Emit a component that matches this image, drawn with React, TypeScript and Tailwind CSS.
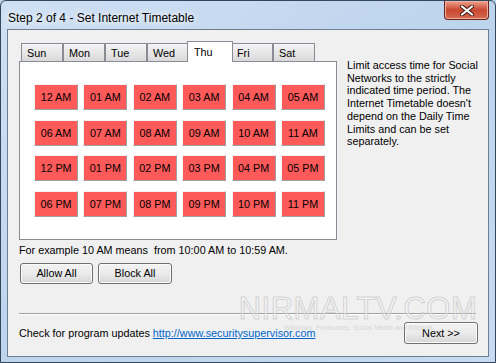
import React from "react";

const HOURS = [
  "12 AM", "01 AM", "02 AM", "03 AM", "04 AM", "05 AM",
  "06 AM", "07 AM", "08 AM", "09 AM", "10 AM", "11 AM",
  "12 PM", "01 PM", "02 PM", "03 PM", "04 PM", "05 PM",
  "06 PM", "07 PM", "08 PM", "09 PM", "10 PM", "11 PM",
];
const DAYS = ["Sun", "Mon", "Tue", "Wed", "Thu", "Fri", "Sat"];
const ACTIVE = "Thu";

const DESC = [
  "Limit access time for Social",
  "Networks to the strictly",
  "indicated time period. The",
  "Internet Timetable doesn't",
  "depend on the Daily Time",
  "Limits and can be set",
  "separately.",
];

function WinButton({ label, w }: { label: string; w: string }) {
  return (
    <button
      className={`${w} h-[21px] rounded-[3px] border border-[#707070] bg-gradient-to-b from-[#f2f2f2] via-[#ebebeb] to-[#d6d6d6] text-[10.8px] text-black shadow-[inset_0_0_0_1px_#fcfcfc]`}
    >
      {label}
    </button>
  );
}

export default function App() {
  return (
    <div className="relative w-[496px] h-[363px] overflow-hidden bg-[#bcd3ec] font-['Liberation_Sans',Arial,sans-serif]">
      <div className="w-[496px] h-[363px] rounded-t-[6px] border border-[#33475c] bg-gradient-to-br from-[#cfe0f3] via-[#bdd4ed] to-[#c6dbf1]">
        {/* Title bar */}
        <div className="flex h-[28px] items-start justify-between">
          <div className="pl-[7px] pt-[8px] text-[12px] text-black [text-shadow:0_0_6px_#fff,0_0_10px_#fff]">
            Step 2 of 4 - Set Internet Timetable
          </div>
          <button className="mr-[6px] flex h-[19px] w-[45px] items-center justify-center rounded-b-[4px] border border-t-0 border-[#6b231a] bg-gradient-to-b from-[#e9a290] via-[#c9472f] to-[#d66a52] shadow-[inset_0_0_0_1px_#f0b0a0]">
            <svg width="14" height="11" viewBox="0 0 14 11">
              <path d="M2 1.5 L12 9.5 M12 1.5 L2 9.5" stroke="#3a1a14" strokeWidth="4" strokeLinecap="round" />
              <path d="M2 1.5 L12 9.5 M12 1.5 L2 9.5" stroke="#ffffff" strokeWidth="2.2" strokeLinecap="round" />
            </svg>
          </button>
        </div>

        {/* Client area */}
        <div className="mx-[6px] h-[328px] border border-[#6e7e8f] bg-[#f0f0f0] text-[10.8px] text-black">
          <div className="mt-[11px] flex">
            {/* tabs + panel */}
            <div className="ml-[11px] w-[318px]">
              <div className="flex h-[20px] items-end pl-[2px]">
                {DAYS.map((d) =>
                  d === ACTIVE ? (
                    <div
                      key={d}
                      className="relative z-10 -mx-[2px] -mb-px h-[21px] w-[46px] border border-b-0 border-[#898c95] bg-white pl-[6px] pt-[2px]"
                    >
                      {d}
                    </div>
                  ) : (
                    <div
                      key={d}
                      className="h-[18px] w-[42px] border border-b-0 border-[#898c95] bg-gradient-to-b from-[#f4f4f4] to-[#dadada] pl-[5px] pt-[3px] leading-[13px]"
                    >
                      {d}
                    </div>
                  )
                )}
              </div>
              <div className="h-[179px] border border-[#898c95] bg-white pl-[14px] pt-[22px]">
                <div className="grid grid-cols-[repeat(6,44px)] gap-x-[5.4px] gap-y-[9.6px]">
                  {HOURS.map((h) => (
                    <div
                      key={h}
                      className="flex h-[26px] items-center justify-center border border-[#f4f4f4] border-r-[#a0a0a0] border-b-[#a0a0a0] bg-[#ff5a5a]"
                    >
                      {h}
                    </div>
                  ))}
                </div>
              </div>
            </div>
            {/* description */}
            <div className="ml-[10px] pt-[18px] leading-[12.7px]">
              {DESC.map((l) => (
                <div key={l} className="whitespace-nowrap">
                  {l}
                </div>
              ))}
            </div>
          </div>

          <div className="ml-[11px] mt-[4px] h-[13px] leading-[13px] whitespace-pre">
            For example 10 AM means  from 10:00 AM to 10:59 AM.
          </div>

          <div className="ml-[12px] mt-[6px] flex gap-[5px]">
            <WinButton label="Allow All" w="w-[73px]" />
            <WinButton label="Block All" w="w-[74px]" />
          </div>

          <div className="ml-[11px] mr-[12px] mt-[29px] h-[2px] border-t border-[#a0a0a0] border-b border-b-white" />

          <div className="ml-[11px] mr-[10px] mt-[7px] flex items-center justify-between">
            <div className="whitespace-nowrap">
              Check for program updates{" "}
              <span className="text-[#0066cc] underline">http://www.securitysupervisor.com</span>
            </div>
            <WinButton label="Next >>" w="w-[74px] h-[22px]" />
          </div>
        </div>
      </div>

      {/* watermark */}
      <div className="pointer-events-none absolute left-[252px] top-[294px] flex w-[212px] flex-col items-center opacity-70">
        <div className="text-[31px] leading-[30px] tracking-[0.5px] text-white/50 [-webkit-text-stroke:1px_#c8c8c8]">
          NIRMALTV.COM
        </div>
        <div className="whitespace-nowrap text-[7px] leading-[8px] text-[#cfcfcf]">
          Windows, Freewares, Social Media and Internet
        </div>
      </div>
    </div>
  );
}
